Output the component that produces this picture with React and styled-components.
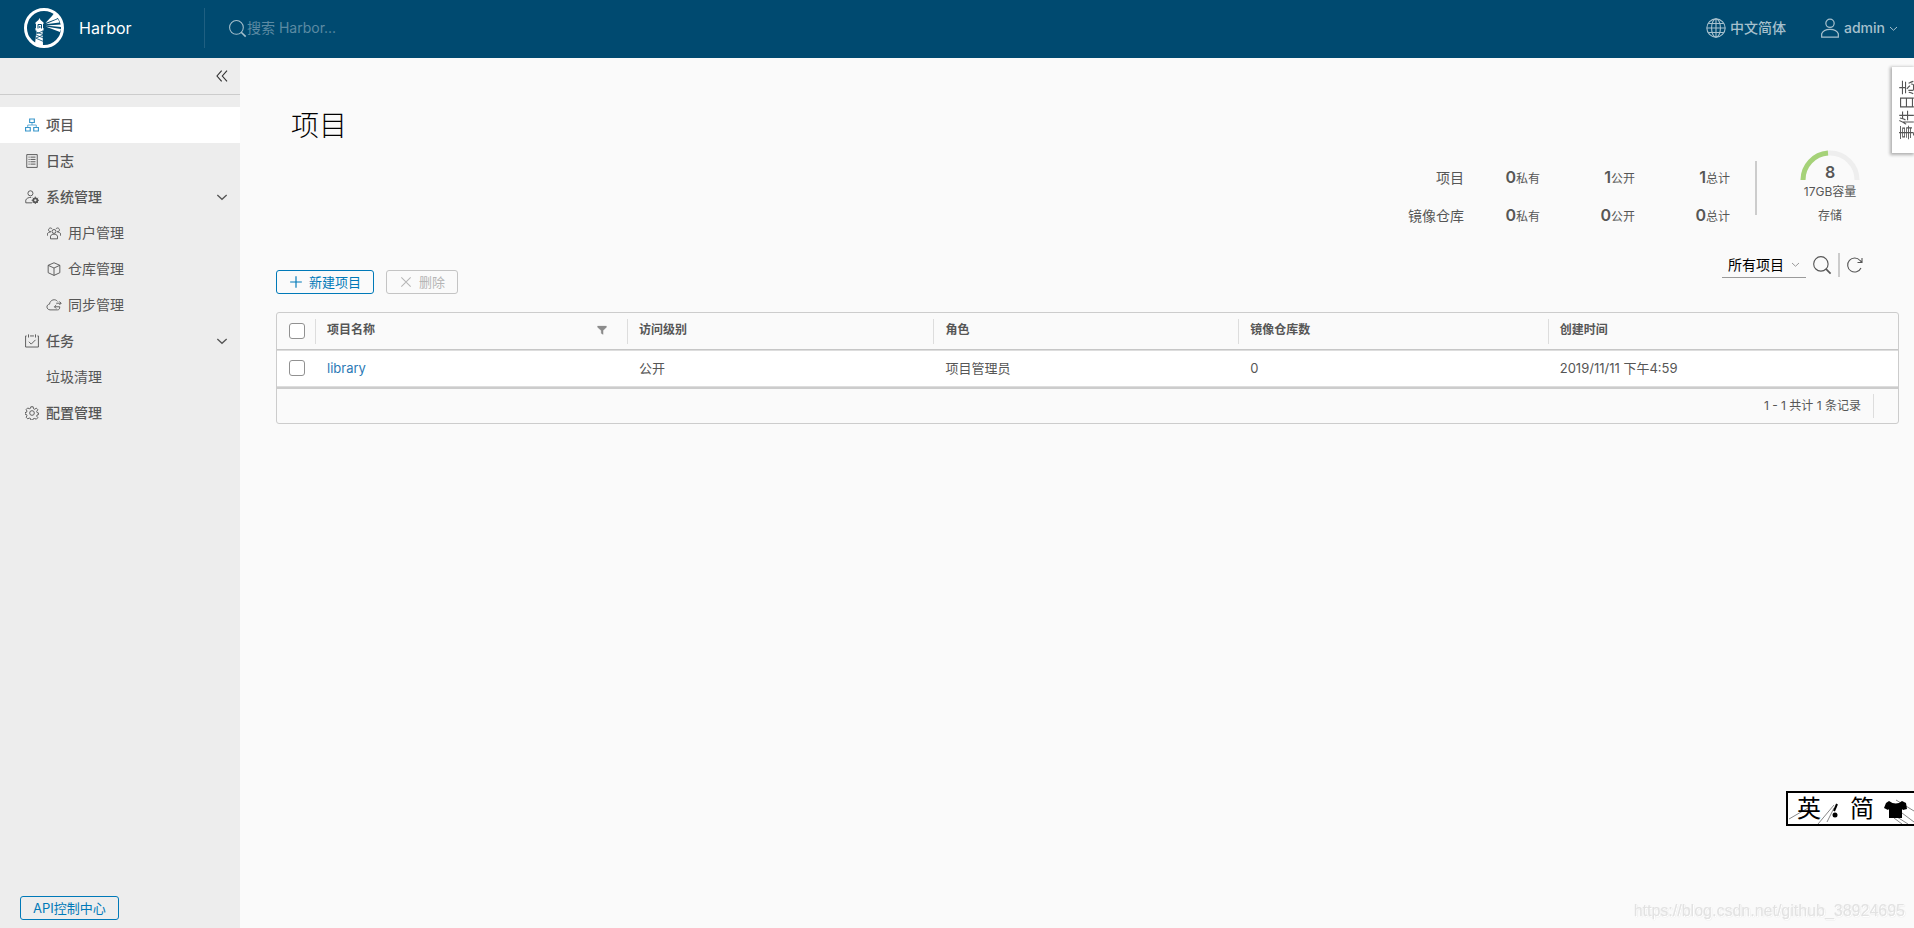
import React from 'react';
import styled, { createGlobalStyle, css } from 'styled-components';

const GlobalStyle = createGlobalStyle`
  *, *::before, *::after { box-sizing: border-box; }
  body {
    margin: 0;
    background: #fafafa;
    color: #565656;
    font-family: Inter, "Noto Sans CJK SC", sans-serif;
    font-size: 14px;
    line-height: 24px;
  }
  button, input, select { font: inherit; color: inherit; }
`;

/* ---------- icons ---------- */

const Svg = styled.svg`
  display: block;
  flex: none;
  width: ${(p) => p.$size || 14}px;
  height: ${(p) => p.$size || 14}px;
  fill: none;
  stroke: currentColor;
  stroke-width: ${(p) => p.$weight || 2.4};
`;

const Icon = ({ size, weight, children }) => (
  <Svg $size={size} $weight={weight} viewBox="0 0 36 36" aria-hidden="true">{children}</Svg>
);

const SearchIcon = ({ size }) => (
  <Icon size={size} weight={2}>
    <circle cx="16" cy="16" r="13" />
    <path d="M25 25l8.500 8.500" strokeWidth="3" />
  </Icon>
);
const GlobeIcon = () => (
  <Icon size={20} weight={2}>
    <circle cx="18" cy="18" r="16.500" />
    <ellipse cx="18" cy="18" rx="8" ry="16.500" />
    <path d="M18 1.500v33M1.500 18h33M4 10h28M4 26h28" />
  </Icon>
);
const UserIcon = () => (
  <Icon size={20} weight={2.2}>
    <circle cx="18" cy="9.500" r="7.500" />
    <path d="M3 34.500v-6c2-5 8-8 15-8s13 3 15 8v6z" />
  </Icon>
);
const ChevronIcon = ({ size, weight = 3 }) => (
  <Icon size={size} weight={weight}><path d="M4 12l14 13 14-13" /></Icon>
);
const CollapseIcon = () => (
  <Icon size={12} weight={3.4}><path d="M17 2L3 18l14 16M33 2L19 18l14 16" /></Icon>
);
const ProjectsIcon = () => (
  <Icon weight={3}>
    <path d="M12 2.500h12v9H12zM1.500 24.500h12v9h-12zM22.500 24.500h12v9h-12z" />
    <path d="M18 12v6M7 24v-6h22v6" strokeWidth="2" />
  </Icon>
);
const LogsIcon = () => (
  <Icon>
    <path d="M4.500 1.500h27v33h-27z" />
    <path d="M9 8h3M14 8h13M9 14h3M14 14h13M9 20h3M14 20h13M9 26h3M14 26h13" strokeWidth="2.500" />
  </Icon>
);
const AdminIcon = () => (
  <Icon>
    <circle cx="14" cy="8.500" r="6.500" />
    <path d="M18 33H2v-7c2-5 7-7 14-7" />
    <circle cx="26.500" cy="26.500" r="5" strokeWidth="5" />
    <path d="M26.500 17v19M17 26.500h19M20 20l13 13M33 20L20 33" strokeWidth="2.500" />
    <circle cx="26.500" cy="26.500" r="3" fill="#ededed" stroke="none" />
  </Icon>
);
const UsersIcon = () => (
  <Icon>
    <circle cx="18" cy="14" r="5" />
    <path d="M9 33v-7c2-4 5-5 9-5s7 1 9 5v7zM10 14c-4 1-6-1-6-4 0-5 7-7 9-2M26 14c4 1 6-1 6-4 0-5-7-7-9-2M1 25v-5c1-3 4-4 8-4M35 25v-5c-1-3-4-4-8-4" />
  </Icon>
);
const BoxIcon = () => (
  <Icon>
    <path d="M18 2l15 6.500v19L18 34.500 3 27.500v-19zM3 8.500l15 7 15-7M18 15.500v19" />
  </Icon>
);
const CloudIcon = () => (
  <Icon size={16} weight={2}>
    <path d="M31 22c0 5-2 7-5 7H9c-9-1-9-12-1-13 1-10 13-13 18-6" />
    <path d="M23 14h11M30 10l4 4-4 4M31 22H19M23 18l-4 4 4 4" />
  </Icon>
);
const TasksIcon = () => (
  <Icon>
    <path d="M4 5H1.500v28.500h33V5H32M9 1v8M27 1v8M13 5h10M10 20l6 6 11-11" />
  </Icon>
);
const GearIcon = () => (
  <Icon>
    <circle cx="18" cy="18" r="6" />
    <path d="M15 2h6l1 5 3 1.500 4-3 4 4-3 4.500 1 3 4 1v4l-4 1-1 3 3 4-4 4-4-2-4 1-1 3h-5l-1-4-3-1-4 2-4-4 2-4-1-3-4-1v-4l4-1 1-3-2-4 4-4 4 2 3-1z" />
  </Icon>
);
const PlusIcon = () => (
  <Icon size={14} weight={3}><path d="M18 3v30M3 18h30" /></Icon>
);
const CrossIcon = () => (
  <Icon size={14} weight={2.6}><path d="M6 6l24 24M30 6L6 30" /></Icon>
);
const RefreshIcon = () => (
  <Icon size={18} weight={2.2}>
    <path d="M30 24a14 14 0 1 1-2-15l3 3M32 4v9h-9" />
  </Icon>
);
const FunnelIcon = () => (
  <Icon size={10} weight={1}><path d="M2 4h32v4L22 20v14l-7-4V20L2 8z" fill="currentColor" /></Icon>
);

const LogoSvg = styled.svg`
  display: block;
  width: 40px;
  height: 40px;
`;

const Logo = () => (
  <LogoSvg viewBox="0 0 40 40" aria-hidden="true">
    <circle cx="20" cy="20" r="18.500" fill="#004a70" stroke="#fff" strokeWidth="3" />
    <path d="M21.500 15L28 8l3-4 4 5-3 2zM21.500 16.200L34 11l1.500 3.500zM22 17.500L37 16.500v2.500zM21.500 18.600L37 21l-1 3z" fill="#fff" />
    <path d="M15.500 10l1 2 3 2.500V16h-.5v4h.5v2.500h-8V20h.5v-4h-.5v-1.500l3-2.500z" fill="#fff" />
    <path d="M14 20.500v-4h3.500v4M15.800 18v2" fill="none" stroke="#004a70" />
    <path d="M12.500 22h6l.5 16-8-2z" fill="#fff" />
    <path d="M12 24l7 2.500M12 27l7.500 3M11.500 30l8 3.500M19 23l-7 3M19 27l-7 3" stroke="#004a70" strokeWidth=".8" />
  </LogoSvg>
);

/* ---------- header ---------- */

const Page = styled.div`
  display: flex;
  flex-direction: column;
  min-height: 100vh;
`;

const Header = styled.header`
  display: flex;
  align-items: center;
  height: 58px;
  padding: 0 16px 2px 24px;
  background: #004a70;
  color: #fff;
`;

const Brand = styled.a`
  display: flex;
  align-items: center;
  gap: 15px;
  width: 180px;
  color: #fff;
  font-size: 16px;
  text-decoration: none;
`;

const SearchBox = styled.label`
  display: flex;
  align-items: center;
  flex: 1;
  height: 40px;
  padding-left: 23px;
  border-left: 1px solid #1f5f81;
  color: #a6c0cd;
`;

const SearchInput = styled.input`
  width: 280px;
  padding: 0;
  border: 0;
  outline: 0;
  background: none;
  &::placeholder { color: #5c8aa3; opacity: 1; }
`;

const HeaderActions = styled.div`
  display: flex;
  gap: 34px;
`;

const HeaderButton = styled.button`
  display: flex;
  align-items: center;
  gap: 4px;
  padding: 0;
  border: 0;
  background: none;
  color: #a6c0cd;
  font-weight: 500;
`;

/* ---------- sidebar ---------- */

const Body = styled.div`
  display: flex;
  flex: 1;
`;

const Sidebar = styled.nav`
  display: flex;
  flex-direction: column;
  flex: none;
  width: 240px;
  background: #ededed;
`;

const CollapseBar = styled.div`
  display: flex;
  justify-content: flex-end;
  align-items: center;
  height: 37px;
  margin-bottom: 12px;
  padding-right: 12px;
  border-bottom: 1px solid #ccc;
`;

const IconButton = styled.button`
  display: flex;
  padding: 0;
  border: 0;
  background: none;
  color: ${(p) => (p.$dark ? '#333' : '#565656')};
`;

const NavItem = styled.a`
  display: flex;
  align-items: center;
  gap: ${(p) => (p.$sub ? 6 : 7)}px;
  height: 36px;
  padding: 0 12px 0 ${(p) => (p.$sub ? 46 : 25)}px;
  color: #565656;
  font-weight: ${(p) => (p.$sub ? 400 : 500)};
  text-decoration: none;
  ${(p) => p.$active && css`
    background: #fff;
    svg { color: #3a97cb; }
  `}
`;

const IconSlot = styled.span`
  display: flex;
  justify-content: center;
  width: ${(p) => (p.$sub ? 16 : 14)}px;
`;

const NavLabel = styled.span`
  flex: 1;
`;

const SidebarFooter = styled.div`
  margin-top: auto;
  padding: 0 20px 8px;
`;

const OutlineButton = styled.button`
  display: inline-flex;
  align-items: center;
  gap: 6px;
  height: 24px;
  padding: 0 12px;
  border: 1px solid #0079b8;
  border-radius: 3px;
  background: none;
  color: #0079b8;
  font-size: 13px;
  line-height: 22px;
  &:disabled { border-color: #c4c4c4; color: #b5b5b5; }
`;

/* ---------- main ---------- */

const Main = styled.main`
  flex: 1;
  padding: 44px 15px 24px 36px;
`;

const Title = styled.h1`
  margin: 0;
  padding-left: 15px;
  color: #000;
  font-size: 28px;
  font-weight: 300;
  line-height: 48px;
`;

const Summary = styled.section`
  display: flex;
  justify-content: flex-end;
  padding-right: 37px;
`;

const StatList = styled.div`
  padding: 11px 25px 0 0;
`;

const StatRow = styled.div`
  display: flex;
  align-items: baseline;
  justify-content: flex-end;
  height: 38px;
  line-height: 32px;
`;

const StatValue = styled.span`
  width: ${(p) => (p.$first ? 76 : 95)}px;
  font-size: 12px;
  text-align: right;
`;

const StatNumber = styled.strong`
  font-size: 16px;
  font-weight: 600;
`;

const Divider = styled.div`
  width: 2px;
  height: ${(p) => p.$height}px;
  background: #ccc;
`;

const SummaryDivider = styled(Divider)`
  margin: 11px 41px 0 0;
`;

const Storage = styled.div`
  display: flex;
  flex-direction: column;
  align-items: center;
  width: 64px;
  font-size: 12px;
`;

const Gauge = styled.div`
  display: grid;
  justify-items: center;
  align-items: end;
  > * { grid-area: 1 / 1; }
`;

const GaugeArc = styled.svg`
  width: 60px;
  height: 30px;
`;

const GaugeValue = styled.strong`
  color: #565656;
  font-size: 16px;
  font-weight: 600;
  line-height: 16px;
`;

const Toolbar = styled.div`
  display: flex;
  justify-content: space-between;
  padding: 15px 35px 18px 0;
`;

const ToolbarButtons = styled.div`
  display: flex;
  align-items: flex-end;
  gap: 12px;
`;

const Filters = styled.div`
  display: flex;
  align-items: center;
  gap: 6px;
  height: 26px;
  margin-bottom: 16px;
`;

const SelectWrap = styled.label`
  display: grid;
  align-items: center;
  width: 84px;
  border-bottom: 1px solid #9a9a9a;
  color: #9a9a9a;
  > * { grid-area: 1 / 1; }
  > svg { justify-self: end; margin-right: 6px; pointer-events: none; }
`;

const Select = styled.select`
  appearance: none;
  width: 100%;
  padding: 0 0 0 6px;
  border: 0;
  border-radius: 0;
  outline: 0;
  background: none;
  color: #000;
  line-height: 24px;
`;

const Grid = styled.div`
  overflow: hidden;
  border: 1px solid #ccc;
  border-radius: 3px;
`;

const Table = styled.table`
  width: 100%;
  border-collapse: separate;
  border-spacing: 0;
  table-layout: fixed;
`;

const Th = styled.th`
  width: ${(p) => p.$width || 'auto'};
  height: 37px;
  padding: 0;
  border-bottom: 1px solid #c6c6c6;
  font-size: 12px;
  font-weight: 600;
  text-align: left;
`;

const ThInner = styled.div`
  display: flex;
  align-items: center;
  justify-content: space-between;
  height: 25px;
  padding: 0 20px 2px 11px;
  border-left: 1px solid #ddd;
  color: #565656;
  svg { color: #8c8c8c; }
`;

const Td = styled.td`
  height: 37px;
  padding: 0 0 1px 12px;
  border-top: 1px solid #ddd;
  border-bottom: 1px solid #ddd;
  background: #fff;
  font-size: 13px;
`;

const CheckTh = styled(Th)`
  padding-left: 12px;
`;

const Checkbox = styled.input`
  appearance: none;
  display: block;
  width: 16px;
  height: 16px;
  margin: 0;
  border: 1px solid #919191;
  border-radius: 3px;
  background: #fff;
  &:checked { background: #0079b8; }
`;

const TableLink = styled.a`
  color: #2b79b5;
  text-decoration: none;
`;

const GridFooter = styled.div`
  display: flex;
  align-items: center;
  justify-content: flex-end;
  height: 36px;
  padding-right: 24px;
  border-top: 2px solid #ccc;
  font-size: 12px;
`;

const FooterText = styled.span`
  padding-right: 12px;
  border-right: 1px solid #ddd;
`;

/* ---------- floating parts ---------- */

const EventTab = styled.button`
  position: fixed;
  top: 67px;
  right: 0;
  width: 22px;
  height: 86px;
  padding: 0;
  border: 0;
  background: #fff;
  box-shadow: -1px 1px 3px 1px #b0b0b0;
  font-size: 15px;
`;

const EventLabel = styled.span`
  display: block;
  width: 22px;
  height: 86px;
  line-height: 30px;
  text-align: center;
  writing-mode: vertical-rl;
  text-orientation: sideways;
  transform: rotate(180deg);
`;

const ImeBar = styled.div`
  position: fixed;
  top: 791px;
  right: 0;
  display: grid;
  width: 128px;
  height: 35px;
  border: 2px solid #000;
  border-right: 0;
  background: #fff;
  color: #000;
  font-size: 24px;
  line-height: 32px;
  > * { grid-area: 1 / 1; }
`;

const ImeArt = styled.svg`
  width: 126px;
  height: 31px;
`;

const ImeText = styled.div`
  display: flex;
  gap: 29px;
  padding-left: 9px;
`;

const Watermark = styled.div`
  position: fixed;
  right: 9px;
  bottom: 5px;
  color: #e2e2e2;
  font-family: "Liberation Sans", sans-serif;
  font-size: 16px;
  text-shadow: 1px 1px 0 #fff, 1px 1px 1px #ccc;
`;

/* ---------- data ---------- */

const NAV = [
  { label: '项目', icon: <ProjectsIcon />, active: true },
  { label: '日志', icon: <LogsIcon /> },
  { label: '系统管理', icon: <AdminIcon />, group: true },
  { label: '用户管理', icon: <UsersIcon />, sub: true },
  { label: '仓库管理', icon: <BoxIcon />, sub: true },
  { label: '同步管理', icon: <CloudIcon />, sub: true },
  { label: '任务', icon: <TasksIcon />, group: true },
  { label: '垃圾清理', sub: true },
  { label: '配置管理', icon: <GearIcon /> },
];

const STATS = [
  { label: '项目', values: [[0, '私有'], [1, '公开'], [1, '总计']] },
  { label: '镜像仓库', values: [[0, '私有'], [0, '公开'], [0, '总计']] },
];

const COLUMNS = [
  { label: '项目名称', width: '19.25%', filter: true },
  { label: '访问级别', width: '18.9%' },
  { label: '角色', width: '18.8%' },
  { label: '镜像仓库数', width: '19.1%' },
  { label: '创建时间' },
];

const PROJECTS = [
  { name: 'library', access: '公开', role: '项目管理员', repos: 0, created: '2019/11/11 下午4:59' },
];

export default function App() {
  return (
    <Page>
      <GlobalStyle />
      <Header>
        <Brand href="#"><Logo />Harbor</Brand>
        <SearchBox>
          <SearchIcon size={19} />
          <SearchInput type="text" placeholder="搜索 Harbor..." aria-label="搜索 Harbor..." />
        </SearchBox>
        <HeaderActions>
          <HeaderButton type="button"><GlobeIcon />中文简体</HeaderButton>
          <HeaderButton type="button"><UserIcon />admin<ChevronIcon size={9} weight={4} /></HeaderButton>
        </HeaderActions>
      </Header>

      <Body>
        <Sidebar>
          <CollapseBar>
            <IconButton type="button" $dark aria-label="收起"><CollapseIcon /></IconButton>
          </CollapseBar>
          {NAV.map((item) => (
            <NavItem key={item.label} href="#" $sub={item.sub} $active={item.active}>
              {item.icon && <IconSlot $sub={item.sub}>{item.icon}</IconSlot>}
              <NavLabel>{item.label}</NavLabel>
              {item.group && <ChevronIcon size={12} weight={4} />}
            </NavItem>
          ))}
          <SidebarFooter>
            <OutlineButton type="button">API控制中心</OutlineButton>
          </SidebarFooter>
        </Sidebar>

        <Main>
          <Title>项目</Title>
          <Summary>
            <StatList>
              {STATS.map((row) => (
                <StatRow key={row.label}>
                  <span>{row.label}</span>
                  {row.values.map(([count, label], i) => (
                    <StatValue key={label} $first={i === 0}>
                      <StatNumber>{count}</StatNumber>{label}
                    </StatValue>
                  ))}
                </StatRow>
              ))}
            </StatList>
            <SummaryDivider $height={54} />
            <Storage>
              <Gauge>
                <GaugeArc viewBox="0 0 60 30" fill="none" strokeWidth="5" aria-hidden="true">
                  <path d="M3 30a27 27 0 0 1 54 0" stroke="#eee" />
                  <path d="M3 30a27 27 0 0 1 25-27" stroke="#a5d278" />
                </GaugeArc>
                <GaugeValue>8</GaugeValue>
              </Gauge>
              <span>17GB容量</span>
              <span>存储</span>
            </Storage>
          </Summary>

          <Toolbar>
            <ToolbarButtons>
              <OutlineButton type="button"><PlusIcon />新建项目</OutlineButton>
              <OutlineButton type="button" disabled><CrossIcon />删除</OutlineButton>
            </ToolbarButtons>
            <Filters>
              <SelectWrap>
                <Select aria-label="项目类型" defaultValue="all">
                  <option value="all">所有项目</option>
                </Select>
                <ChevronIcon size={9} weight={4} />
              </SelectWrap>
              <IconButton type="button" aria-label="搜索"><SearchIcon size={20} /></IconButton>
              <Divider $height={24} />
              <IconButton type="button" aria-label="刷新"><RefreshIcon /></IconButton>
            </Filters>
          </Toolbar>

          <Grid>
            <Table>
              <thead>
                <tr>
                  <CheckTh $width="38px"><Checkbox type="checkbox" aria-label="全选" /></CheckTh>
                  {COLUMNS.map((col) => (
                    <Th key={col.label} $width={col.width}>
                      <ThInner>{col.label}{col.filter && <FunnelIcon />}</ThInner>
                    </Th>
                  ))}
                </tr>
              </thead>
              <tbody>
                {PROJECTS.map((p) => (
                  <tr key={p.name}>
                    <Td><Checkbox type="checkbox" aria-label={p.name} /></Td>
                    <Td><TableLink href="#">{p.name}</TableLink></Td>
                    <Td>{p.access}</Td>
                    <Td>{p.role}</Td>
                    <Td>{p.repos}</Td>
                    <Td>{p.created}</Td>
                  </tr>
                ))}
              </tbody>
            </Table>
            <GridFooter><FooterText>1 - 1 共计 1 条记录</FooterText></GridFooter>
          </Grid>
        </Main>
      </Body>

      <EventTab type="button"><EventLabel>事件日志</EventLabel></EventTab>
      <ImeBar>
        <ImeArt viewBox="0 0 126 31" aria-hidden="true">
          <path d="M1 26L20 15M30 31L46 12M39 29L46 15M108 7l18 11M114 20l12 9M109 24l11 7M106 25l8 6" stroke="#888" fill="none" />
          <path d="M49 11l-3 7" stroke="#000" strokeWidth="2" />
          <circle cx="47" cy="22" r="2.500" />
          <path d="M101 8q7 5 13 0l4 2 1 6-4 1-1-1v9h-13v-9l-1 1-4-2 2-5z" />
        </ImeArt>
        <ImeText><span>英</span><span>简</span></ImeText>
      </ImeBar>
      <Watermark>https://blog.csdn.net/github_38924695</Watermark>
    </Page>
  );
}
